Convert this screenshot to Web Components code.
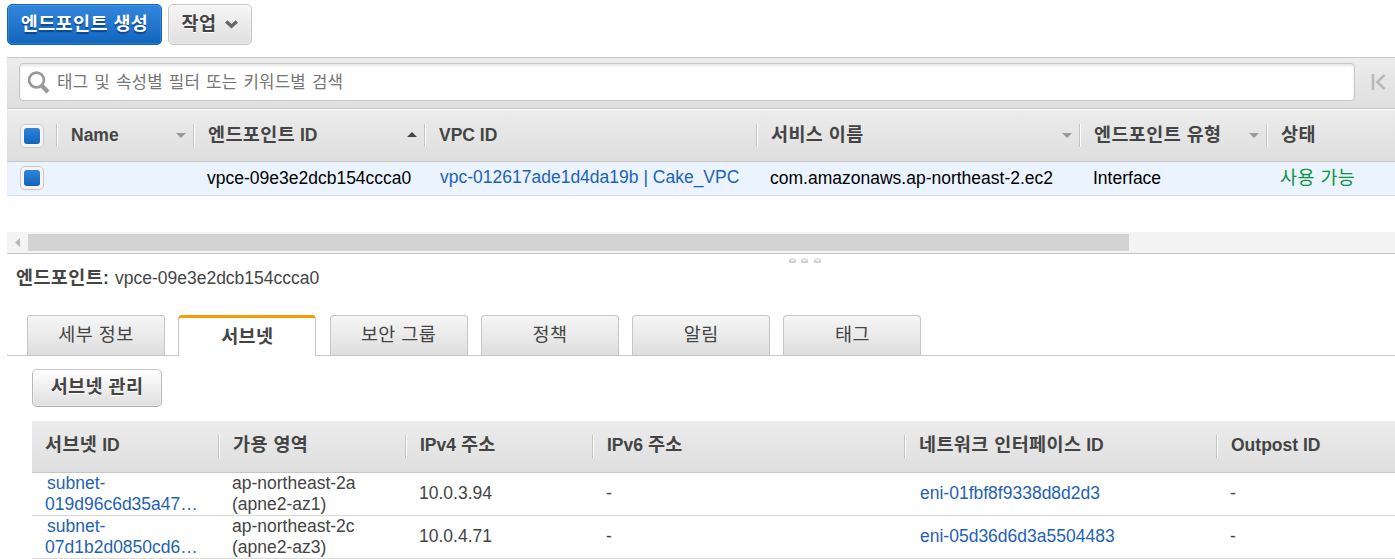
<!DOCTYPE html>
<html lang="ko">
<head>
<meta charset="utf-8">
<title>엔드포인트</title>
<style>
  body {
    margin: 0;
    background: #fff;
    color: #444;
    font: 17.5px/21px "Liberation Sans", "Noto Sans CJK KR", sans-serif;
    overflow: hidden;
  }
</style>
</head>
<body>
<vpc-console></vpc-console>

<script>
// Estilos comunes a todos los componentes
const base = `
  * { box-sizing: border-box; }
  .ko {
    font-family: "Noto Sans CJK KR", sans-serif;
    font-size: var(--ko-size, 18.5px);
    letter-spacing: var(--ko-gap, 0.4px);
    word-spacing: var(--ko-word, 0px);
    line-height: 0;
  }
`;

// Separa los textos en hangul para darles su propia fuente
function ko(texto) {
  return texto.replace(/[가-힣]+(?: [가-힣]+)*/g, '<span class="ko">$&</span>');
}

class Boton extends HTMLElement {
  constructor() {
    super();
    this.attachShadow({ mode: 'open' });
  }

  connectedCallback() {
    const flecha = this.hasAttribute('menu')
      ? `<svg width="13" height="9" viewBox="0 0 13 9"><path d="M1.2 1.4L6.5 6.2L11.8 1.4" fill="none" stroke="#666" stroke-width="3.4"/></svg>`
      : '';
    this.shadowRoot.innerHTML = `<style>${base}
      :host { display: block; }
      button {
        display: flex;
        align-items: center;
        justify-content: center;
        gap: 9px;
        width: 100%;
        height: 100%;
        padding: 0;
        border: 1px solid #c5c5c5;
        border-radius: 5px;
        background: linear-gradient(#f6f6f6, #dfdfdf);
        box-shadow: inset 0 0 0 1px rgba(255, 255, 255, .35);
        color: #444;
        font: bold 17.5px/21px "Liberation Sans", sans-serif;
        text-shadow: 0 1px 0 #fff;
        white-space: nowrap;
      }
      :host([tipo="primario"]) button {
        border-color: #1464b6;
        background: linear-gradient(#3287dd, #1265bd);
        box-shadow: inset 0 0 0 1px rgba(255, 255, 255, .12);
        color: #fff;
        text-shadow: 0 2px 1px rgba(0, 30, 80, .5);
      }
      :host([tipo="claro"]) button {
        padding-bottom: 1px;
        border-color: #c8c8c8 #b8b8b8 #aaa;
        background: linear-gradient(#fff, #dedede);
      }
      svg { margin-bottom: 1px; }
    </style>
    <button><span>${ko(this.textContent)}</span>${flecha}</button>`;
  }
}

class Buscador extends HTMLElement {
  constructor() {
    super();
    this.attachShadow({ mode: 'open' });
  }

  connectedCallback() {
    this.shadowRoot.innerHTML = `<style>${base}
      :host {
        display: flex;
        align-items: center;
        box-sizing: border-box;
        height: 52px;
        padding: 0 0 2px 12px;
        border-top: 1px solid #c6c6c6;
        border-bottom: 1px solid #c6c6c6;
        background: linear-gradient(#ececec, #dfdfdf);
        --ko-size: 16.8px;
        --ko-gap: 0.2px;
        --ko-word: 1.1px;
      }
      .campo {
        display: flex;
        align-items: center;
        gap: 7px;
        width: 1336px;
        height: 38px;
        padding-left: 7px;
        border: 1px solid #c6c6c6;
        border-radius: 4px;
        background: #fff;
        box-shadow: inset 0 2px 3px rgba(0, 0, 0, .1);
        color: #757575;
      }
      .campo span { padding-top: 1px; }
      .lupa { margin-top: 2px; }
      .inicio { margin-left: 15px; }
    </style>
    <div class="campo">
      <svg class="lupa" width="23" height="24" viewBox="0 0 23 24" fill="none" stroke="#999">
        <circle cx="9.5" cy="9" r="7.4" stroke-width="2.6"/>
        <path d="M14.5 14.5L21 21" stroke-width="4.4"/>
      </svg>
      <span>${ko('태그 및 속성별 필터 또는 키워드별 검색')}</span>
    </div>
    <svg class="inicio" width="16" height="18" viewBox="0 0 16 18" fill="none" stroke="#b8b8b8">
      <path d="M3 1V17" stroke-width="2.6"/>
      <path d="M14.5 1.8L7.3 9L14.5 16.2" stroke-width="2.6"/>
    </svg>`;
  }
}

// Casilla marcada
class Casilla extends HTMLElement {
  constructor() {
    super();
    this.attachShadow({ mode: 'open' });
    this.shadowRoot.innerHTML = `<style>
      :host {
        display: block;
        box-sizing: border-box;
        width: 24px;
        height: 24px;
        padding: 3px;
        border: 1px solid #c8c8c8;
        border-radius: 5px;
        background: #f5f5f5;
      }
      div {
        height: 16px;
        border-radius: 3px;
        background: linear-gradient(#2f85dc, #1063b9);
      }
    </style><div></div>`;
  }
}

class Listado extends HTMLElement {
  constructor() {
    super();
    this.attachShadow({ mode: 'open' });
    this.columnas = [
      { titulo: 'Name', orden: 'baja' },
      { titulo: '엔드포인트 ID', orden: 'sube' },
      { titulo: 'VPC ID' },
      { titulo: '서비스 이름', orden: 'baja' },
      { titulo: '엔드포인트 유형', orden: 'baja' },
      { titulo: '상태' },
    ];
  }

  connectedCallback() {
    this.render();
  }

  render() {
    let html = '';
    for (const col of this.columnas) {
      const orden = col.orden ? `<i class="${col.orden}"></i>` : '';
      html += `<div class="col"><span>${ko(col.titulo)}</span>${orden}</div>`;
    }
    this.shadowRoot.innerHTML = `<style>${base}
      :host { display: block; }
      .cabecera, .fila {
        display: grid;
        grid-template-columns: 49px 137px 231px 332px 323px 187px 1fr;
        align-items: center;
        white-space: nowrap;
      }
      .cabecera {
        height: 53px;
        border-top: 1px solid #fafafa;
        border-bottom: 1px solid #c6c6c6;
        background: linear-gradient(#ececec, #dedede);
        font-weight: bold;
      }
      .col {
        display: flex;
        align-items: center;
        justify-content: space-between;
        height: 23px;
        padding: 0 7px 0 14px;
        border-left: 1px solid #c4c4c4;
        box-shadow: inset 1px 0 #fff;
      }
      i {
        border: 5px solid transparent;
        border-bottom: 0;
        border-top-color: #999;
      }
      i.sube {
        border: 5px solid transparent;
        border-top: 0;
        border-bottom-color: #444;
        margin: 0 0 3px;
      }
      .fila {
        height: 34px;
        border-bottom: 1px solid #dadde3;
        background: #eaf3fe;
        color: #000;
      }
      .fila > * { padding-left: 14px; }
      .fila .enlace { padding: 0 0 2px 16px; color: #1f62b5; }
      .fila .estado { padding-bottom: 1px; color: #0d9440; }
      mi-casilla { margin-left: 13px; }
      .fila mi-casilla { padding: 3px; margin-bottom: 1px; }
    </style>
    <div class="cabecera"><mi-casilla></mi-casilla>${html}</div>
    <div class="fila">
      <mi-casilla></mi-casilla>
      <span></span>
      <span>vpce-09e3e2dcb154ccca0</span>
      <span class="enlace">vpc-012617ade1d4da19b | Cake_VPC</span>
      <span>com.amazonaws.ap-northeast-2.ec2</span>
      <span>Interface</span>
      <span class="estado">${ko('사용 가능')}</span>
    </div>`;
  }
}

// Barra de desplazamiento y divisor de paneles
class Divisor extends HTMLElement {
  constructor() {
    super();
    this.attachShadow({ mode: 'open' });
    this.shadowRoot.innerHTML = `<style>
      :host { display: block; }
      .barra {
        display: flex;
        align-items: center;
        height: 21px;
        background: #f4f4f4;
      }
      .barra svg { margin: 0 8px; }
      .pulgar { width: 1101px; height: 17px; background: #d3d3d3; }
      .puntos {
        display: flex;
        justify-content: center;
        gap: 5.5px;
        box-sizing: border-box;
        height: 10px;
        padding: 4px 0 0 207px;
        border-top: 1px solid #c6c6c6;
      }
      .puntos b {
        width: 7px;
        height: 5px;
        border: 2px solid #d2d2d2;
        border-top-color: #e3e3e3;
        border-radius: 3px 3px 1px 1px;
        box-sizing: border-box;
      }
    </style>
    <div class="barra">
      <svg width="5" height="9" viewBox="0 0 5 9"><path d="M5 0V9L0 4.5Z" fill="#b8b8b8"/></svg>
      <div class="pulgar"></div>
    </div>
    <div class="puntos"><b></b><b></b><b></b></div>`;
  }
}

class Pestanas extends HTMLElement {
  constructor() {
    super();
    this.attachShadow({ mode: 'open' });
    this.nombres = ['세부 정보', '서브넷', '보안 그룹', '정책', '알림', '태그'];
    this.activa = 1;
  }

  connectedCallback() {
    let html = '';
    this.nombres.forEach((nombre, i) => {
      html += `<div class="${i === this.activa ? 'tab activa' : 'tab'}">${ko(nombre)}</div>`;
    });
    this.shadowRoot.innerHTML = `<style>${base}
      :host {
        display: flex;
        gap: 13.3px;
        box-sizing: border-box;
        height: 41px;
        padding-left: 20px;
        border-bottom: 1px solid #c6c6c6;
      }
      .tab {
        display: flex;
        align-items: center;
        justify-content: center;
        width: 138px;
        height: 40px;
        padding-bottom: 5px;
        border: 1px solid #c6c6c6;
        border-bottom: 0;
        border-radius: 4px 4px 0 0;
        background: linear-gradient(#f6f6f6, #dedede);
      }
      .activa {
        height: 41px;
        padding-bottom: 5px;
        border-top: 3px solid #f90;
        background: #fff;
        font-weight: bold;
      }
    </style>${html}`;
  }
}

class TablaSubredes extends HTMLElement {
  constructor() {
    super();
    this.attachShadow({ mode: 'open' });
    this.titulos = ['서브넷 ID', '가용 영역', 'IPv4 주소', 'IPv6 주소', '네트워크 인터페이스 ID', 'Outpost ID'];
    this.data = [
      { subred: '019d96c6d35a47…', zona: 'ap-northeast-2a', az: '(apne2-az1)', ip: '10.0.3.94', eni: 'eni-01fbf8f9338d8d2d3' },
      { subred: '07d1b2d0850cd6…', zona: 'ap-northeast-2c', az: '(apne2-az3)', ip: '10.0.4.71', eni: 'eni-05d36d6d3a5504483' },
    ];
  }

  connectedCallback() {
    this.render();
  }

  render() {
    let html = '<div class="cabecera">';
    for (const titulo of this.titulos) {
      html += `<div>${ko(titulo)}</div>`;
    }
    html += '</div>';
    for (const fila of this.data) {
      html += `<div class="fila">
        <div class="doble enlace"><span>subnet-</span><br>${fila.subred}</div>
        <div class="doble">${fila.zona}<br>${fila.az}</div>
        <div>${fila.ip}</div>
        <div>-</div>
        <div class="enlace">${fila.eni}</div>
        <div>-</div>
      </div>`;
    }
    this.shadowRoot.innerHTML = `<style>${base}
      :host { display: block; }
      .cabecera, .fila {
        display: grid;
        grid-template-columns: 186px 187px 187px 312px 312px 1fr;
        align-items: center;
        white-space: nowrap;
      }
      .cabecera {
        height: 52px;
        border-bottom: 1px solid #c6c6c6;
        background: linear-gradient(#ececec, #dfdfdf);
        font-weight: bold;
      }
      .cabecera div {
        height: 23px;
        padding-left: 14px;
        border-left: 1px solid #c4c4c4;
        box-shadow: inset 1px 0 #fff;
        line-height: 21px;
      }
      .cabecera div:first-child {
        padding-left: 13px;
        border-left: 0;
        box-shadow: none;
      }
      .fila { height: 43px; border-bottom: 1px solid #d9d9d9; }
      .fila div { padding: 0 0 2px 14px; }
      .fila div:first-child { padding-left: 13px; }
      .fila div:nth-child(5) { padding-left: 16px; }
      .fila .doble { padding-bottom: 0; }
      .enlace { color: #1f62b5; }
      .enlace span { margin-left: 2px; }
    </style>${html}`;
  }
}

class Consola extends HTMLElement {
  constructor() {
    super();
    this.attachShadow({ mode: 'open' });
    this.shadowRoot.innerHTML = `<style>${base}
      :host { display: block; padding: 4px 0 0 7px; }
      .acciones { display: flex; gap: 6px; margin-bottom: 12px; }
      .crear { width: 155px; height: 41px; }
      .menu { width: 84px; height: 41px; }
      mi-divisor { margin-top: 36px; }
      .titulo {
        display: flex;
        gap: 6px;
        margin: 5px 0 26px 9px;
      }
      .gestionar { width: 130px; height: 38px; margin: 13px 0 14px 25px; }
      mi-subredes { margin-left: 25px; }
    </style>
    <div class="acciones">
      <mi-boton class="crear" tipo="primario">엔드포인트 생성</mi-boton>
      <mi-boton class="menu" menu>작업</mi-boton>
    </div>
    <mi-buscador></mi-buscador>
    <mi-listado></mi-listado>
    <mi-divisor></mi-divisor>
    <div class="titulo"><b>${ko('엔드포인트:')}</b><span>vpce-09e3e2dcb154ccca0</span></div>
    <mi-pestanas></mi-pestanas>
    <mi-boton class="gestionar" tipo="claro">서브넷 관리</mi-boton>
    <mi-subredes></mi-subredes>`;
  }
}

// Definir los elementos personalizados
customElements.define('mi-boton', Boton);
customElements.define('mi-buscador', Buscador);
customElements.define('mi-casilla', Casilla);
customElements.define('mi-listado', Listado);
customElements.define('mi-divisor', Divisor);
customElements.define('mi-pestanas', Pestanas);
customElements.define('mi-subredes', TablaSubredes);
customElements.define('vpc-console', Consola);
</script>
</body>
</html>
